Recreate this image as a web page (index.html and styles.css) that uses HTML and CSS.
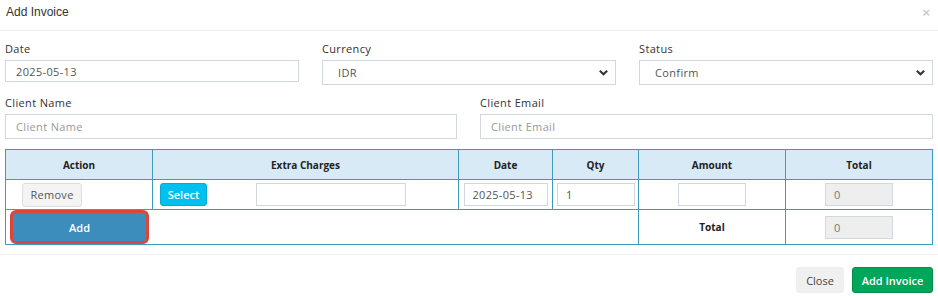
FILE: index.html
```html
<!DOCTYPE html>
<html lang="en">
<head>
  <meta charset="UTF-8" />
  <meta name="viewport" content="width=device-width, initial-scale=1" />
  <title>Add Invoice</title>
  <link rel="stylesheet" href="styles.css">
</head>
<body>

  <div class="modal">
    <!-- HEADER -->
    <div class="modal-header">
      <h4>Add Invoice</h4>
      <span class="close-x">&times;</span>
    </div>

    <!-- BODY -->
    <div class="modal-body">
      <div class="row row-3">
        <div class="field">
          <label>Date</label>
          <input type="text" value="2025-05-13">
        </div>
        <div class="field">
          <label>Currency</label>
          <div class="select">IDR
            <svg viewBox="0 0 12 12" width="11" height="11"><path d="M2 4l4 4 4-4" fill="none" stroke="#333" stroke-width="2.2"/></svg>
          </div>
        </div>
        <div class="field">
          <label>Status</label>
          <div class="select">Confirm
            <svg viewBox="0 0 12 12" width="11" height="11"><path d="M2 4l4 4 4-4" fill="none" stroke="#333" stroke-width="2.2"/></svg>
          </div>
        </div>
      </div>

      <div class="row row-2">
        <div class="field">
          <label>Client Name</label>
          <input type="text" placeholder="Client Name">
        </div>
        <div class="field">
          <label>Client Email</label>
          <input type="text" placeholder="Client Email">
        </div>
      </div>

      <table class="charges">
        <colgroup>
          <col style="width:147px">
          <col style="width:306px">
          <col style="width:94px">
          <col style="width:86px">
          <col style="width:147px">
          <col style="width:147px">
        </colgroup>
        <thead>
          <tr>
            <th>Action</th>
            <th>Extra Charges</th>
            <th>Date</th>
            <th>Qty</th>
            <th>Amount</th>
            <th>Total</th>
          </tr>
        </thead>
        <tbody>
          <tr>
            <td class="action-cell"><button class="btn btn-default">Remove</button></td>
            <td>
              <div class="extra">
                <button class="btn btn-info">Select</button>
                <input type="text" class="sm w150">
              </div>
            </td>
            <td class="center"><input type="text" class="sm w84" value="2025-05-13"></td>
            <td class="center"><input type="text" class="sm w78" value="1"></td>
            <td class="center"><input type="text" class="sm w68"></td>
            <td class="center"><input type="text" class="sm w68 ro" value="0" readonly></td>
          </tr>
          <tr>
            <td colspan="4" class="add-cell"><button class="btn btn-add">Add</button></td>
            <td class="center strong">Total</td>
            <td class="center"><input type="text" class="sm w68 ro" value="0" readonly></td>
          </tr>
        </tbody>
      </table>
    </div>

    <!-- FOOTER -->
    <div class="modal-footer">
      <button class="btn btn-close">Close</button>
      <button class="btn btn-success">Add Invoice</button>
    </div>
  </div>

</body>
</html>
```

FILE: styles.css
```css
/* RESET */
* {
  margin: 0;
  padding: 0;
  box-sizing: border-box;
}

html, body {
  width: 100%;
  height: 100%;
  overflow: hidden;
  background: #fff;
  font-family: 'Open Sans', sans-serif;
  font-size: 11px;
  color: #333;
}

.modal {
  width: 938px;
}

.modal-header {
  height: 31px;
  border-bottom: 1px solid #eeeeee;
  display: flex;
  align-items: center;
  justify-content: space-between;
  padding: 0 6px 6px 6px;
}

.modal-header h4 {
  font-family: 'Liberation Sans', Arial, sans-serif;
  font-weight: normal;
  font-size: 12px;
  color: #333;
}

.close-x {
  font-family: 'Liberation Sans', Arial, sans-serif;
  font-size: 13px;
  font-weight: bold;
  color: #ccc;
  margin-right: 2px;
}

.modal-body {
  padding: 10px 5px 9px 5px;
}

.row {
  display: grid;
  gap: 23px;
  margin-bottom: 10px;
}

.row-3 {
  grid-template-columns: 294px 294px 294px;
}

.row-2 {
  grid-template-columns: 452px 453px;
}

.field label {
  display: block;
  font-size: 11px;
  letter-spacing: 0.35px;
  color: #333;
  margin-bottom: 4px;
  line-height: 15px;
}

.field input {
  width: 100%;
  height: 22px;
  border: 1px solid #d2d6de;
  padding: 0 10px;
  font-family: inherit;
  font-size: 11px;
  letter-spacing: 0.35px;
  color: #555;
  outline: none;
}

.row-2 .field input {
  height: 25px;
}

.field input::placeholder {
  color: #999;
}

.select {
  height: 25px;
  border: 1px solid #d2d6de;
  padding: 0 6px 0 15px;
  display: flex;
  align-items: center;
  justify-content: space-between;
  font-size: 11px;
  letter-spacing: 0.35px;
  color: #555;
}

.select svg {
  display: block;
}

/* TABLE */
.charges {
  width: 927px;
  border-collapse: collapse;
  table-layout: fixed;
  margin-top: 2px;
}

.charges th,
.charges td {
  border: 1px solid #3c9bc0;
  height: 30px;
  padding: 0 4px;
}

.charges th {
  background: #d9eaf7;
  font-size: 10px;
  font-weight: bold;
  color: #222;
}

.charges td.center {
  text-align: center;
}

.charges td.action-cell {
  padding-left: 16px;
}

.charges td.strong {
  font-weight: bold;
  font-size: 10px;
  color: #222;
}

.charges input.sm {
  height: 23px;
  border: 1px solid #d2d6de;
  padding: 0 8px;
  font-family: inherit;
  font-size: 11px;
  letter-spacing: 0.3px;
  color: #555;
  vertical-align: middle;
  outline: none;
}

.charges input.ro {
  background: #eeeeee;
  color: #777;
}

.w150 { width: 150px; }
.w84 { width: 84px; }
.w78 { width: 78px; }
.w68 { width: 68px; }

.extra {
  display: flex;
  align-items: center;
  gap: 49px;
  padding-left: 3px;
}

.btn {
  font-family: inherit;
  border-radius: 3px;
  cursor: pointer;
  font-size: 11px;
}

.btn-default {
  width: 60px;
  height: 24px;
  background: #f4f4f4;
  border: 1px solid #ddd;
  color: #555;
  letter-spacing: 0.3px;
  vertical-align: middle;
}

.btn-info {
  width: 47px;
  height: 23px;
  background: #00c0ef;
  border: 1px solid #00acd6;
  color: #fff;
  font-weight: 600;
}

.add-cell {
  padding: 0 0 0 4px;
}

.btn-add {
  width: 139px;
  height: 34px;
  background: #3c8dbc;
  border: 3px solid #d9473c;
  border-radius: 6px;
  color: #fff;
  font-weight: 600;
  vertical-align: middle;
}

/* FOOTER */
.modal-footer {
  border-top: 1px solid #f0f0f0;
  display: flex;
  justify-content: flex-end;
  gap: 8px;
  padding: 12px 5px 0 0;
}

.btn-close {
  width: 48px;
  height: 26px;
  background: #f0f0f0;
  border: 1px solid #f0f0f0;
  color: #444;
}

.btn-success {
  width: 81px;
  height: 26px;
  background: #00a65a;
  border: 1px solid #008d4c;
  color: #fff;
  font-weight: 600;
}
```
